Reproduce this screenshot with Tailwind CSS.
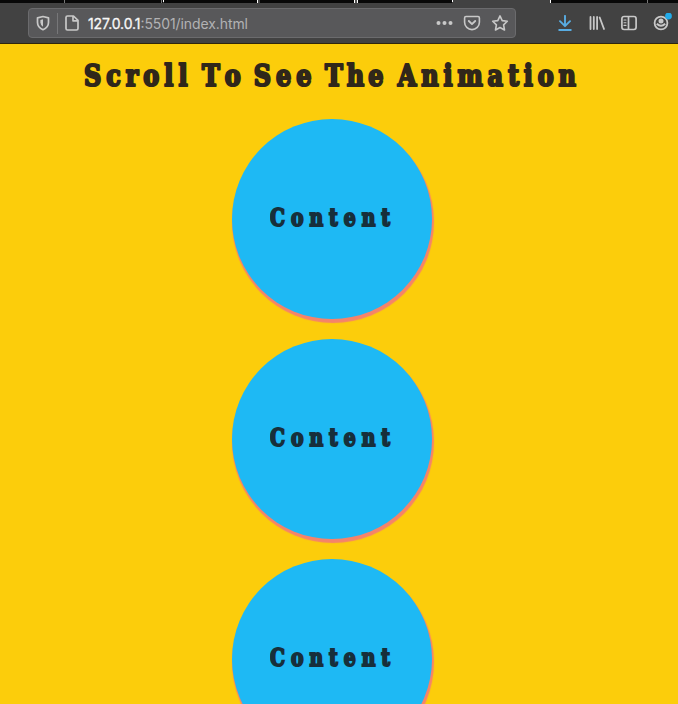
<!DOCTYPE html>
<html lang="en">
<head>
<meta charset="utf-8">
<title>Scroll Animation</title>
<script src="https://cdn.jsdelivr.net/npm/@tailwindcss/browser@4"></script>
</head>
<body class="h-screen overflow-hidden bg-[#fccd0b] font-['DejaVu_Serif_Condensed','DejaVu_Serif',serif]">
<header class="flex h-11 flex-col border-b border-[#30260c] bg-[#424242] font-[Inter,sans-serif]">
  <div class="flex h-[3px] shrink-0">
    <div class="w-16 bg-[#080808]"></div><div class="w-px bg-[#777]"></div>
    <div class="w-24 bg-[#080808]"></div><div class="w-px bg-[#777]"></div><div class="w-px bg-[#080808]"></div><div class="h-0.5 w-px bg-white"></div>
    <div class="w-[93px] bg-[#080808]"></div><div class="w-px bg-white"></div><div class="w-0.5"></div>
    <div class="w-[94px] bg-[#080808]"></div><div class="w-px bg-white"></div><div class="w-0.5 bg-[#555]"></div><div class="w-px bg-white"></div>
    <div class="w-[94px] bg-[#080808]"></div><div class="h-0.5 w-px bg-white"></div><div class="w-[97px]"></div><div class="w-px bg-white"></div>
    <div class="w-[96px] bg-[#080808]"></div><div class="w-px bg-[#777]"></div><div class="grow bg-[#080808]"></div>
  </div>
  <div class="flex h-10 items-center pl-7 text-[#c8c8c8]">
    <div class="flex h-[30px] w-[488px] items-center rounded border border-[#6b6b6d] bg-[#58585a]">
      <svg class="ml-[6px] h-4 w-4" viewBox="0 0 16 16" fill="none" stroke="currentColor" stroke-width="1.700" stroke-linejoin="round"><path d="M8 1.500 13.500 2.800v4.700q0 4.800-5.500 7.200-5.500-2.400-5.500-7.200V2.800z"/><path d="M8 4.300v7.500q-2.600-1.700-2.600-4.500V4.900z" fill="currentColor" stroke="none"/></svg>
      <div class="ml-[6px] h-[21px] w-px bg-[#777779]"></div>
      <svg class="ml-[6px] h-4 w-4" viewBox="0 0 16 16" fill="none" stroke="currentColor" stroke-width="1.700" stroke-linejoin="round"><path d="M3.500 1h6l4.500 4.300v8.200q0 1.500-1.500 1.500h-9Q2 15 2 13.500v-11Q2 1 3.500 1zM9 1v4.800h4.800"/></svg>
      <svg class="ml-[8px] h-6 w-[162px] overflow-visible" viewBox="0 0 162 24"><text x="0" y="17.500" font-size="14" fill="#b2b2b4" textLength="160"><tspan fill="#f7f7f7" stroke="#f7f7f7" stroke-width=".3">127.0.0.1</tspan>:5501/index.html</text></svg>
      <svg class="ml-[186px] h-4 w-[18px]" viewBox="0 0 18 16" fill="currentColor"><circle cx="2.500" cy="8" r="2"/><circle cx="8.500" cy="8" r="2"/><circle cx="14.500" cy="8" r="2"/></svg>
      <svg class="ml-[9px] h-[18px] w-[18px]" viewBox="0 0 18 18" fill="none" stroke="currentColor" stroke-width="1.600" stroke-linecap="round" stroke-linejoin="round"><path d="M3 2.500h12q1.400 0 1.400 1.400v4.300a7.400 7.400 0 0 1-14.800 0V3.900Q1.600 2.500 3 2.500z"/><path d="m5.800 7 3.200 3.100L12.200 7" stroke-width="1.900"/></svg>
      <svg class="ml-[10px] h-[18px] w-[18px]" viewBox="0 0 18 18" fill="none" stroke="currentColor" stroke-width="1.600" stroke-linejoin="round"><path d="m9 1.900 2.200 4.700 5.100.7-3.700 3.600.9 5.100L9 13.500 4.500 16l.9-5.100-3.700-3.600 5.100-.7z"/></svg>
    </div>
    <svg class="ml-[41px] h-4 w-4 text-[#58ace2]" viewBox="0 0 16 16" fill="none" stroke="currentColor" stroke-width="1.900" stroke-linecap="round" stroke-linejoin="round"><path d="M8 .9v10M3 6.200l5 5 5-5M2.200 15h11.600"/></svg>
    <svg class="ml-4 h-4 w-4" viewBox="0 0 16 16" fill="none" stroke="currentColor" stroke-width="1.800" stroke-linecap="round"><path d="M1.500 2v12M4.800 2v12M8.100 2v12M10.700 2.500 15 14"/></svg>
    <svg class="ml-4 h-4 w-4" viewBox="0 0 16 16" fill="none" stroke="currentColor" stroke-width="1.700" stroke-linecap="round"><rect x=".9" y="1.500" width="14.200" height="13" rx="2.200"/><path d="M7.500 2v12"/><path d="M3 5h2M3 7.700h2M3 10.400h2" stroke-width="1.100"/></svg>
    <svg class="ml-4 h-5 w-[19px]" viewBox="0 0 19 20" fill="none" stroke="currentColor" stroke-width="1.800"><circle cx="8" cy="10" r="6.400"/><circle cx="8" cy="8" r="2.500" fill="currentColor" stroke="none"/><path d="M3.800 10.700q4.200 4.200 8.400 0" stroke-width="2"/><circle cx="15.500" cy="3" r="3.400" fill="#22abea" stroke="none"/></svg>
  </div>
</header>
<main class="flex h-[660px] flex-col overflow-hidden">
  <h1 class="h-[75px] shrink-0">
    <svg class="h-[60px] w-full" viewBox="0 0 678 60" font-size="29.500" font-weight="700" fill="#30271a" stroke="#30271a" stroke-width="2.200" stroke-linejoin="round">
      <g transform="scale(.9 1)">
      <text x="93.300" y="42.500" textLength="115">Scroll</text>
      <text x="224.500" y="42.500" textLength="43">To</text>
      <text x="282" y="42.500" textLength="64">See</text>
      <text x="361" y="42.500" textLength="65">The</text>
      <text x="442" y="42.500" textLength="198">Animation</text>
      </g>
    </svg>
  </h1>
  <section class="flex flex-col gap-5 pl-[231.500px]">
    <div class="flex h-[200px] w-[200px] shrink-0 items-center justify-center rounded-full bg-[#1eb9f4] shadow-[1px_3px_1px_1px_#f5836a]">
      <svg class="h-10 w-[124px]" viewBox="0 0 124 40" font-size="24" font-weight="700" fill="#172f3b" stroke="#172f3b" stroke-width="1.900"><text transform="scale(.87 1)" x="0" y="27.500" textLength="138">Content</text></svg>
    </div>
    <div class="flex h-[200px] w-[200px] shrink-0 items-center justify-center rounded-full bg-[#1eb9f4] shadow-[1px_3px_1px_1px_#f5836a]">
      <svg class="h-10 w-[124px]" viewBox="0 0 124 40" font-size="24" font-weight="700" fill="#172f3b" stroke="#172f3b" stroke-width="1.900"><text transform="scale(.87 1)" x="0" y="27.500" textLength="138">Content</text></svg>
    </div>
    <div class="flex h-[200px] w-[200px] shrink-0 items-center justify-center rounded-full bg-[#1eb9f4] shadow-[1px_3px_1px_1px_#f5836a]">
      <svg class="h-10 w-[124px]" viewBox="0 0 124 40" font-size="24" font-weight="700" fill="#172f3b" stroke="#172f3b" stroke-width="1.900"><text transform="scale(.87 1)" x="0" y="27.500" textLength="138">Content</text></svg>
    </div>
  </section>
</main>
</body>
</html>
